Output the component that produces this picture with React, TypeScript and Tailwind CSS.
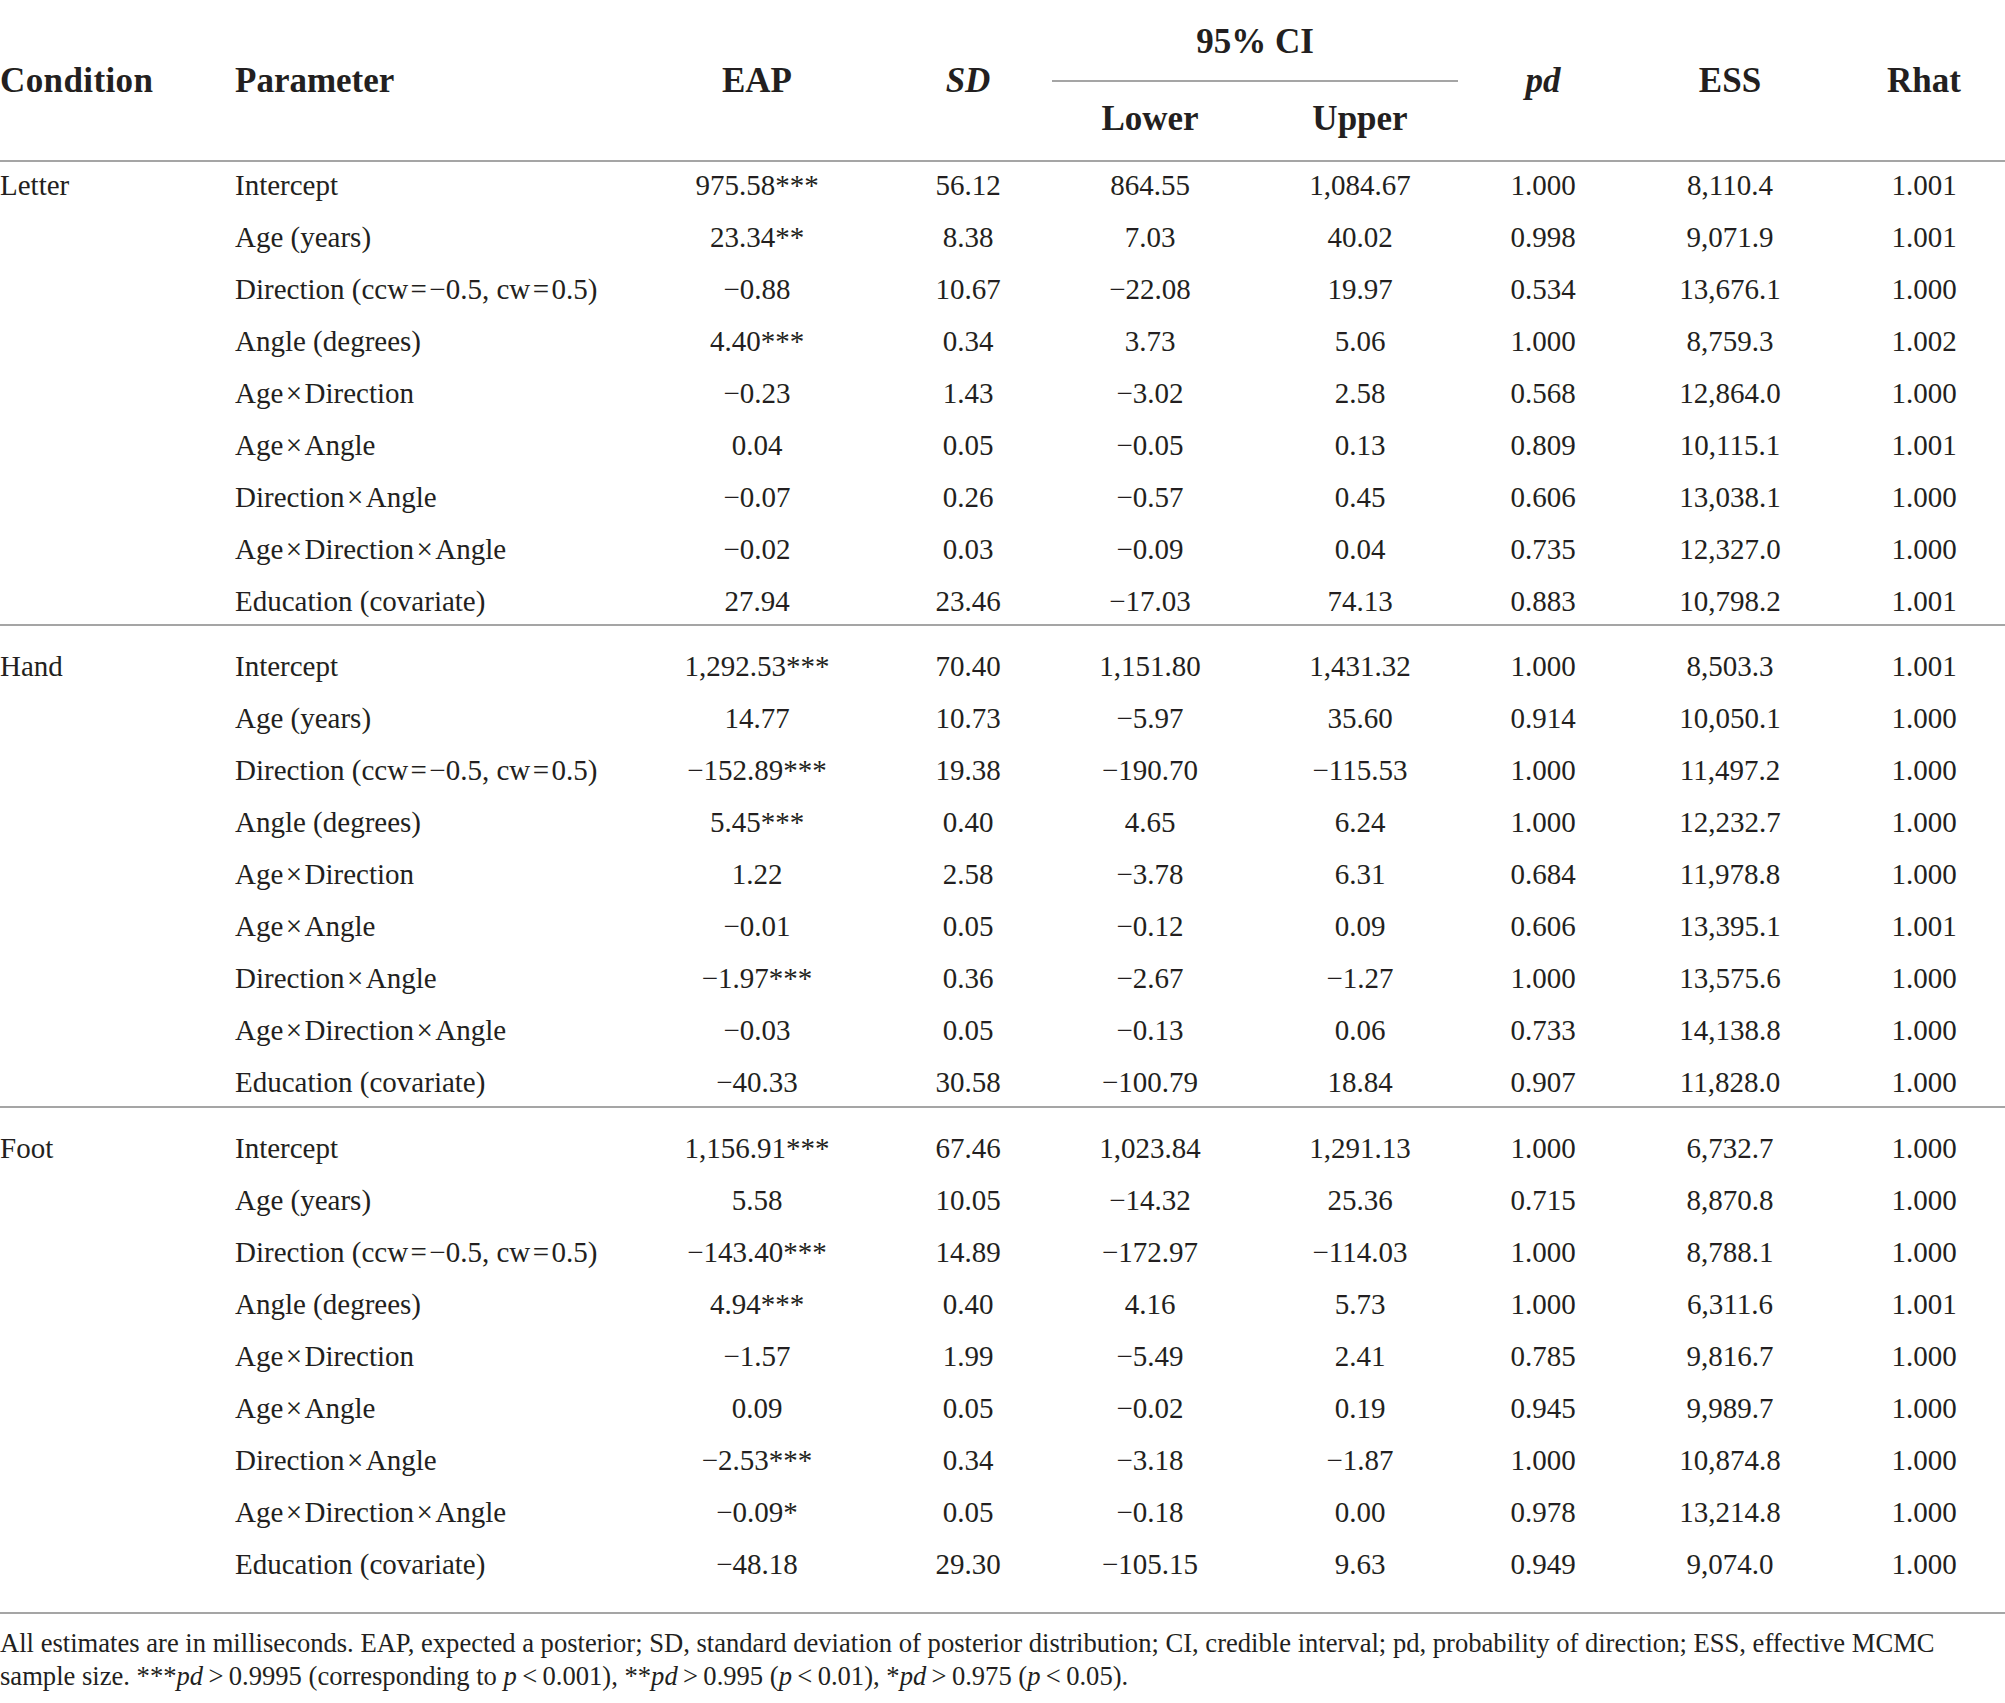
const cols = 'grid grid-cols-[235px_417px_210px_190px_196px_210px_170px_204px_173px]'

type Row = [string, string, string, string, string, string, string, string]

const x = '\u200a×\u200a'
const dir = 'Direction (ccw\u200a=\u200a−0.5, cw\u200a=\u200a0.5)'

const groups: { name: string; box: string; rows: Row[] }[] = [
  {
    name: 'Letter',
    box: 'h-[464px]',
    rows: [
      ['Intercept', '975.58***', '56.12', '864.55', '1,084.67', '1.000', '8,110.4', '1.001'],
      ['Age (years)', '23.34**', '8.38', '7.03', '40.02', '0.998', '9,071.9', '1.001'],
      [dir, '−0.88', '10.67', '−22.08', '19.97', '0.534', '13,676.1', '1.000'],
      ['Angle (degrees)', '4.40***', '0.34', '3.73', '5.06', '1.000', '8,759.3', '1.002'],
      [`Age${x}Direction`, '−0.23', '1.43', '−3.02', '2.58', '0.568', '12,864.0', '1.000'],
      [`Age${x}Angle`, '0.04', '0.05', '−0.05', '0.13', '0.809', '10,115.1', '1.001'],
      [`Direction${x}Angle`, '−0.07', '0.26', '−0.57', '0.45', '0.606', '13,038.1', '1.000'],
      [`Age${x}Direction${x}Angle`, '−0.02', '0.03', '−0.09', '0.04', '0.735', '12,327.0', '1.000'],
      ['Education (covariate)', '27.94', '23.46', '−17.03', '74.13', '0.883', '10,798.2', '1.001'],
    ],
  },
  {
    name: 'Hand',
    box: 'h-[482px] pt-[17px]',
    rows: [
      ['Intercept', '1,292.53***', '70.40', '1,151.80', '1,431.32', '1.000', '8,503.3', '1.001'],
      ['Age (years)', '14.77', '10.73', '−5.97', '35.60', '0.914', '10,050.1', '1.000'],
      [dir, '−152.89***', '19.38', '−190.70', '−115.53', '1.000', '11,497.2', '1.000'],
      ['Angle (degrees)', '5.45***', '0.40', '4.65', '6.24', '1.000', '12,232.7', '1.000'],
      [`Age${x}Direction`, '1.22', '2.58', '−3.78', '6.31', '0.684', '11,978.8', '1.000'],
      [`Age${x}Angle`, '−0.01', '0.05', '−0.12', '0.09', '0.606', '13,395.1', '1.001'],
      [`Direction${x}Angle`, '−1.97***', '0.36', '−2.67', '−1.27', '1.000', '13,575.6', '1.000'],
      [`Age${x}Direction${x}Angle`, '−0.03', '0.05', '−0.13', '0.06', '0.733', '14,138.8', '1.000'],
      ['Education (covariate)', '−40.33', '30.58', '−100.79', '18.84', '0.907', '11,828.0', '1.000'],
    ],
  },
  {
    name: 'Foot',
    box: 'h-[506px] pt-[17px]',
    rows: [
      ['Intercept', '1,156.91***', '67.46', '1,023.84', '1,291.13', '1.000', '6,732.7', '1.000'],
      ['Age (years)', '5.58', '10.05', '−14.32', '25.36', '0.715', '8,870.8', '1.000'],
      [dir, '−143.40***', '14.89', '−172.97', '−114.03', '1.000', '8,788.1', '1.000'],
      ['Angle (degrees)', '4.94***', '0.40', '4.16', '5.73', '1.000', '6,311.6', '1.001'],
      [`Age${x}Direction`, '−1.57', '1.99', '−5.49', '2.41', '0.785', '9,816.7', '1.000'],
      [`Age${x}Angle`, '0.09', '0.05', '−0.02', '0.19', '0.945', '9,989.7', '1.000'],
      [`Direction${x}Angle`, '−2.53***', '0.34', '−3.18', '−1.87', '1.000', '10,874.8', '1.000'],
      [`Age${x}Direction${x}Angle`, '−0.09*', '0.05', '−0.18', '0.00', '0.978', '13,214.8', '1.000'],
      ['Education (covariate)', '−48.18', '29.30', '−105.15', '9.63', '0.949', '9,074.0', '1.000'],
    ],
  },
]

// padding on some columns shifts the centre of their text
const pads = ['', 'pl-[22px]', '', 'pl-[14px]', '', '', 'pl-[11px]']

function Head({ children, className = '' }: { children: React.ReactNode; className?: string }) {
  return (
    <div className={`row-span-2 flex items-center text-[35px] font-bold leading-[35px] ${className}`}>
      {children}
    </div>
  )
}

export default function App() {
  return (
    <div className="w-[2005px] bg-white font-['Liberation_Serif',serif] text-[#231f20]">
      {/* header */}
      <div className={`${cols} grid-rows-[82px_78px] border-b-2 border-[#a5a5a5]`}>
        <Head className="tracking-[0.4px]">Condition</Head>
        <Head>Parameter</Head>
        <Head className="justify-center">EAP</Head>
        <Head className="justify-center pl-[22px]">
          <i>SD</i>
        </Head>
        <div className="col-span-2 border-b-2 border-[#a5a5a5] pt-[24px] text-center text-[35px] font-bold leading-[35px]">
          95% CI
        </div>
        <Head className="justify-center">
          <i>pd</i>
        </Head>
        <Head className="justify-center">ESS</Head>
        <Head className="justify-center pl-[11px]">Rhat</Head>
        <div className="col-start-5 row-start-2 pt-[19px] text-center text-[35px] font-bold leading-[35px]">Lower</div>
        <div className="col-start-6 row-start-2 pl-[14px] pt-[19px] text-center text-[35px] font-bold leading-[35px]">
          Upper
        </div>
      </div>

      {/* body */}
      {groups.map((g) => (
        <div key={g.name} className={`${g.box} border-b-2 border-[#a5a5a5] text-[29px] leading-[46px]`}>
          {g.rows.map((r, i) => (
            <div key={i} className={`${cols} h-[52px] whitespace-nowrap`}>
              <div>{i === 0 ? g.name : ''}</div>
              <div>{r[0]}</div>
              {r.slice(1).map((v, j) => (
                <div key={j} className={`text-center ${pads[j]}`}>
                  {v}
                </div>
              ))}
            </div>
          ))}
        </div>
      ))}

      {/* footnote */}
      <div className="pt-[13px] text-[26.6px] leading-[33px]">
        All estimates are in milliseconds. EAP, expected a posterior; SD, standard deviation of posterior distribution; CI,
        credible interval; pd, probability of direction; ESS, effective MCMC
        <br />
        sample size. ***<i>pd</i>{'\u2009>\u2009'}0.9995 (corresponding to <i>p</i>
        {'\u2009<\u2009'}0.001), **<i>pd</i>
        {'\u2009>\u2009'}0.995 (<i>p</i>
        {'\u2009<\u2009'}0.01), *<i>pd</i>
        {'\u2009>\u2009'}0.975 (<i>p</i>
        {'\u2009<\u2009'}0.05).
      </div>
    </div>
  )
}
